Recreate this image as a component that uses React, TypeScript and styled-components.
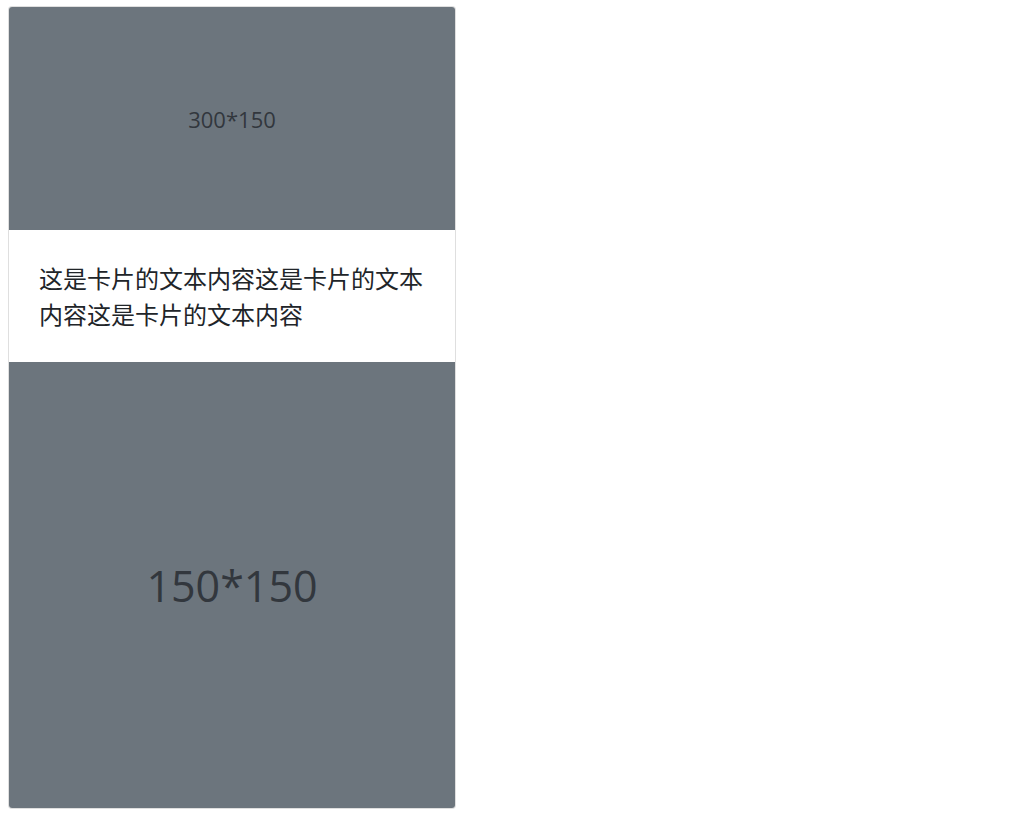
import React from "react";
import styled, { createGlobalStyle } from "styled-components";

const Global = createGlobalStyle`
  html, body { margin: 0; padding: 0; background: #fff; }
  body { font-family: "Open Sans", "Noto Sans CJK SC", sans-serif; color: #212529; }
`;

const Page = styled.div`
  padding: 6px 8px;
`;

const Card = styled.div`
  width: 448px;
  box-sizing: border-box;
  border: 1px solid rgba(0, 0, 0, 0.125);
  border-radius: 4px;
  overflow: hidden;
  display: flex;
  flex-direction: column;
  background: #fff;
`;

const Placeholder = styled.div<{ $ratio: number; $size: number }>`
  width: 100%;
  aspect-ratio: ${(p) => p.$ratio};
  background: #6c757d;
  color: #32373d;
  display: flex;
  align-items: center;
  justify-content: center;
  font-family: "Open Sans", sans-serif;
  font-size: ${(p) => p.$size}px;
`;

const Body = styled.div`
  padding: 30px;
  font-family: "Noto Sans CJK SC", sans-serif;
  font-size: 24px;
  line-height: 36px;
  color: #212529;
`;

export default function App() {
  return (
    <>
      <Global />
      <Page>
        <Card>
          <Placeholder $ratio={2} $size={22}>300*150</Placeholder>
          <Body>这是卡片的文本内容这是卡片的文本内容这是卡片的文本内容</Body>
          <Placeholder $ratio={1} $size={43}>150*150</Placeholder>
        </Card>
      </Page>
    </>
  );
}
